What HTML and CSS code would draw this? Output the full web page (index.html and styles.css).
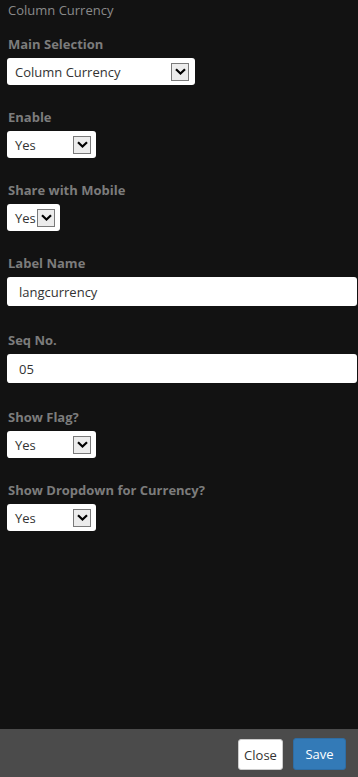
FILE: index.html
```html
<!DOCTYPE html>
<html>
<head>
    <title>Column Currency</title>
    <link rel="stylesheet" href="styles.css">
</head>
<body>
    <div class="panel">
        <div class="panel-body">
            <div class="panel-title">Column Currency</div>

            <div class="form-group">
                <label>Main Selection</label>
                <div class="select select-wide">
                    <span class="select-text">Column Currency</span>
                    <span class="select-arrow"><svg width="11" height="7" viewBox="0 0 11 7"><path d="M1 1.2 L5.5 5.5 L10 1.2" fill="none" stroke="#000" stroke-width="2.2"/></svg></span>
                </div>
            </div>

            <div class="form-group">
                <label>Enable</label>
                <div class="select">
                    <span class="select-text">Yes</span>
                    <span class="select-arrow"><svg width="11" height="7" viewBox="0 0 11 7"><path d="M1 1.2 L5.5 5.5 L10 1.2" fill="none" stroke="#000" stroke-width="2.2"/></svg></span>
                </div>
            </div>

            <div class="form-group">
                <label>Share with Mobile</label>
                <div class="select select-small">
                    <span class="select-text">Yes</span>
                    <span class="select-arrow"><svg width="11" height="7" viewBox="0 0 11 7"><path d="M1 1.2 L5.5 5.5 L10 1.2" fill="none" stroke="#000" stroke-width="2.2"/></svg></span>
                </div>
            </div>

            <div class="form-group form-group-text">
                <label>Label Name</label>
                <input type="text" class="text-input" value="langcurrency">
            </div>

            <div class="form-group form-group-text">
                <label>Seq No.</label>
                <input type="text" class="text-input" value="05">
            </div>

            <div class="form-group">
                <label>Show Flag?</label>
                <div class="select">
                    <span class="select-text">Yes</span>
                    <span class="select-arrow"><svg width="11" height="7" viewBox="0 0 11 7"><path d="M1 1.2 L5.5 5.5 L10 1.2" fill="none" stroke="#000" stroke-width="2.2"/></svg></span>
                </div>
            </div>

            <div class="form-group">
                <label>Show Dropdown for Currency?</label>
                <div class="select">
                    <span class="select-text">Yes</span>
                    <span class="select-arrow"><svg width="11" height="7" viewBox="0 0 11 7"><path d="M1 1.2 L5.5 5.5 L10 1.2" fill="none" stroke="#000" stroke-width="2.2"/></svg></span>
                </div>
            </div>
        </div>

        <div class="panel-footer">
            <button type="button" class="btn btn-default">Close</button>
            <button type="button" class="btn btn-primary">Save</button>
        </div>
    </div>
</body>
</html>
```

FILE: styles.css
```css
body {
    margin: 0;
    background-color: #121212;
    font-family: "Open Sans", Arial, sans-serif;
    font-size: 13px;
    color: #333;
}

.panel {
    display: flex;
    flex-direction: column;
    height: 777px;
}

.panel-body {
    flex: 1;
    padding: 0 1px 0 7px;
}

.panel-title {
    line-height: 20px;
    padding-left: 1px;
    color: #8a8a8a;
    margin-bottom: 14px;
}

.form-group {
    margin-bottom: 22px;
}

.form-group-text {
    margin-bottom: 24px;
}

label {
    display: block;
    line-height: 20px;
    margin-bottom: 4px;
    padding-left: 1px;
    font-weight: bold;
    color: #7c7c7c;
}

.select {
    display: flex;
    align-items: center;
    justify-content: space-between;
    box-sizing: border-box;
    width: 89px;
    height: 27px;
    padding: 0 5px 0 8px;
    background-color: #fff;
    border-radius: 3px;
}

.select-wide {
    width: 188px;
    padding-right: 6px;
}

.select-small {
    width: 53px;
    padding-right: 5px;
}

.select-text {
    color: #333;
}

.select-arrow {
    display: flex;
    align-items: center;
    justify-content: center;
    box-sizing: border-box;
    width: 18px;
    height: 18px;
    border: 1px solid #7a7a7a;
    background-color: #ececec;
}

.select-small .select-text {
    margin-right: 1px;
}

.text-input {
    display: block;
    box-sizing: border-box;
    width: 350px;
    height: 29px;
    padding: 0 12px;
    border: none;
    border-radius: 3px;
    background-color: #fff;
    font-family: "Open Sans", Arial, sans-serif;
    font-size: 13px;
    color: #333;
}

.panel-footer {
    display: flex;
    justify-content: flex-end;
    align-items: flex-start;
    gap: 10px;
    height: 48px;
    box-sizing: border-box;
    padding: 10px 12px 0 0;
    background-color: #4b4b4b;
}

.btn {
    font-family: "Open Sans", Arial, sans-serif;
    font-size: 13px;
    border-radius: 3px;
    cursor: pointer;
    padding: 0;
}

.btn-default {
    width: 45px;
    height: 31px;
    background-color: #fff;
    border: 1px solid #ccc;
    color: #333;
}

.btn-primary {
    width: 53px;
    height: 32px;
    margin-top: -1px;
    background-color: #337ab7;
    border: 1px solid #2e6da4;
    color: #fff;
}
```
